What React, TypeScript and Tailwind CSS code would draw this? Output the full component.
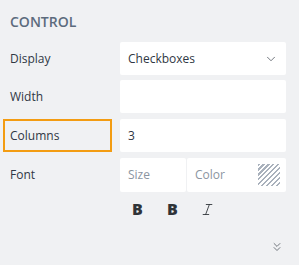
import React from 'react';
import { ChevronDown, ChevronsDown, Italic } from 'lucide-react';

function Label({ text, highlight }: { text: string; highlight?: boolean }) {
  return (
    <div className="w-[110px] h-full flex items-center relative">
      {highlight && (
        <div className="absolute left-[3px] right-[-2px] top-0 bottom-0 border-2 border-[#f39c12]"></div>
      )}
      <span className="pl-[10px] text-[12px] text-[#2f3744]">{text}</span>
    </div>
  );
}

export default function App() {
  return (
    <div
      className="w-[299px] h-[265px] bg-[#f0f1f3] overflow-hidden"
      style={{ fontFamily: '"Open Sans", "Noto Sans", sans-serif' }}
    >
      <div className="pl-[10px] pt-[11px] h-[42px]">
        <h2 className="text-[14px] font-semibold text-[#5c6b7d]">CONTROL</h2>
      </div>

      <div className="flex h-[33px]">
        <div className="w-[120px] flex items-center">
          <span className="pl-[10px] text-[12px] text-[#2f3744]">Display</span>
        </div>
        <div className="w-[166px] bg-white rounded-[2px] flex items-center justify-between pl-[8px] pr-[8px]">
          <span className="text-[12px] text-[#2f3744]">Checkboxes</span>
          <ChevronDown size={14} strokeWidth={1.4} className="text-[#555b63]" />
        </div>
      </div>

      <div className="flex h-[33px] mt-[5px]">
        <div className="w-[120px] flex items-center">
          <span className="pl-[10px] text-[12px] text-[#2f3744]">Width</span>
        </div>
        <div className="w-[166px] bg-white rounded-[2px]"></div>
      </div>

      <div className="flex h-[33px] mt-[6px]">
        <div className="w-[120px] h-full">
          <Label text="Columns" highlight />
        </div>
        <div className="w-[166px] bg-white rounded-[2px] flex items-center pl-[8px]">
          <span className="text-[12px] text-[#2f3744]">3</span>
        </div>
      </div>

      <div className="flex h-[34px] mt-[6px]">
        <div className="w-[120px] flex items-center">
          <span className="pl-[10px] text-[12px] text-[#2f3744]">Font</span>
        </div>
        <div className="w-[166px] flex gap-[1px]">
          <div className="w-[66px] bg-white rounded-[2px] flex items-center pl-[8px]">
            <span className="text-[12px] text-[#8b95a1]">Size</span>
          </div>
          <div className="flex-1 bg-white rounded-[2px] flex items-center justify-between pl-[8px] pr-[6px]">
            <span className="text-[12px] text-[#8b95a1]">Color</span>
            <div className="w-[22px] h-[22px] bg-[repeating-linear-gradient(135deg,#a9b1bc_0px,#a9b1bc_1.5px,#ffffff_1.5px,#ffffff_3.5px)]"></div>
          </div>
        </div>
      </div>

      <div className="flex h-[34px] pl-[120px]">
        <div className="w-[35px] flex items-center justify-center">
          <span className="text-[16px] font-extrabold text-[#2f3338]">B</span>
        </div>
        <div className="w-[35px] flex items-center justify-center">
          <span className="text-[16px] font-extrabold text-[#2f3338]">B</span>
        </div>
        <div className="w-[35px] flex items-center justify-center">
          <Italic size={15} strokeWidth={1.4} className="text-[#2f3338]" />
        </div>
      </div>

      <div className="flex justify-end pr-[15px] pt-[14px]">
        <ChevronsDown size={14} strokeWidth={1.3} className="text-[#4a5058]" />
      </div>
    </div>
  );
}
